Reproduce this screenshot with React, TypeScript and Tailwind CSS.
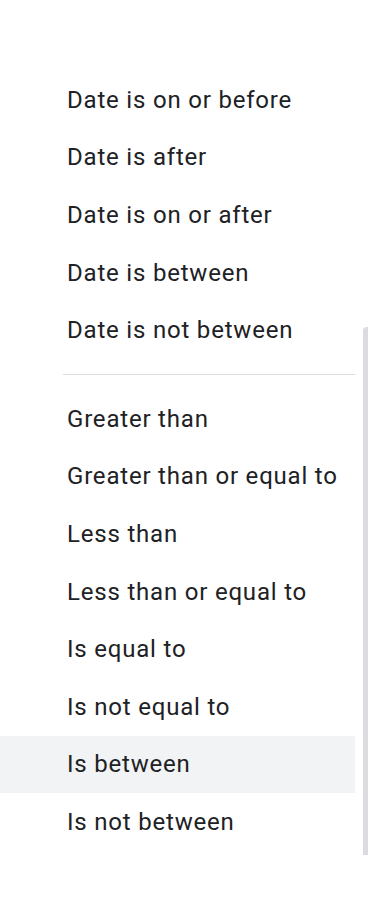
const GROUPS: string[][] = [
  ['Date is on or before', 'Date is after', 'Date is on or after', 'Date is between', 'Date is not between'],
  [
    'Greater than',
    'Greater than or equal to',
    'Less than',
    'Less than or equal to',
    'Is equal to',
    'Is not equal to',
    'Is between',
    'Is not between',
  ],
];

const ACTIVE = 'Is between';

export default function App() {
  return (
    <div className="relative h-[918px] w-[368px] overflow-hidden bg-white" style={{ fontFamily: 'Roboto, "Noto Sans", sans-serif' }}>
      <div className="w-[355px] pt-[71px]">
        {GROUPS.map((group, gi) => (
          <div key={gi}>
            {gi > 0 && <div className="my-[15px] ml-[63px] h-px bg-[#dadce0]" />}
            {group.map((label) => (
              <div
                key={label}
                className={`flex h-[57.6px] items-center pl-[67px] text-[24px] tracking-[0.8px] text-[#202124] ${label === ACTIVE ? 'bg-[#f1f3f4]' : ''}`}
              >
                {label}
              </div>
            ))}
          </div>
        ))}
      </div>
      <div className="absolute left-[363px] top-[327px] h-[528px] w-[8px] rounded-t-[4px] bg-[#dadce0]" />
    </div>
  );
}
